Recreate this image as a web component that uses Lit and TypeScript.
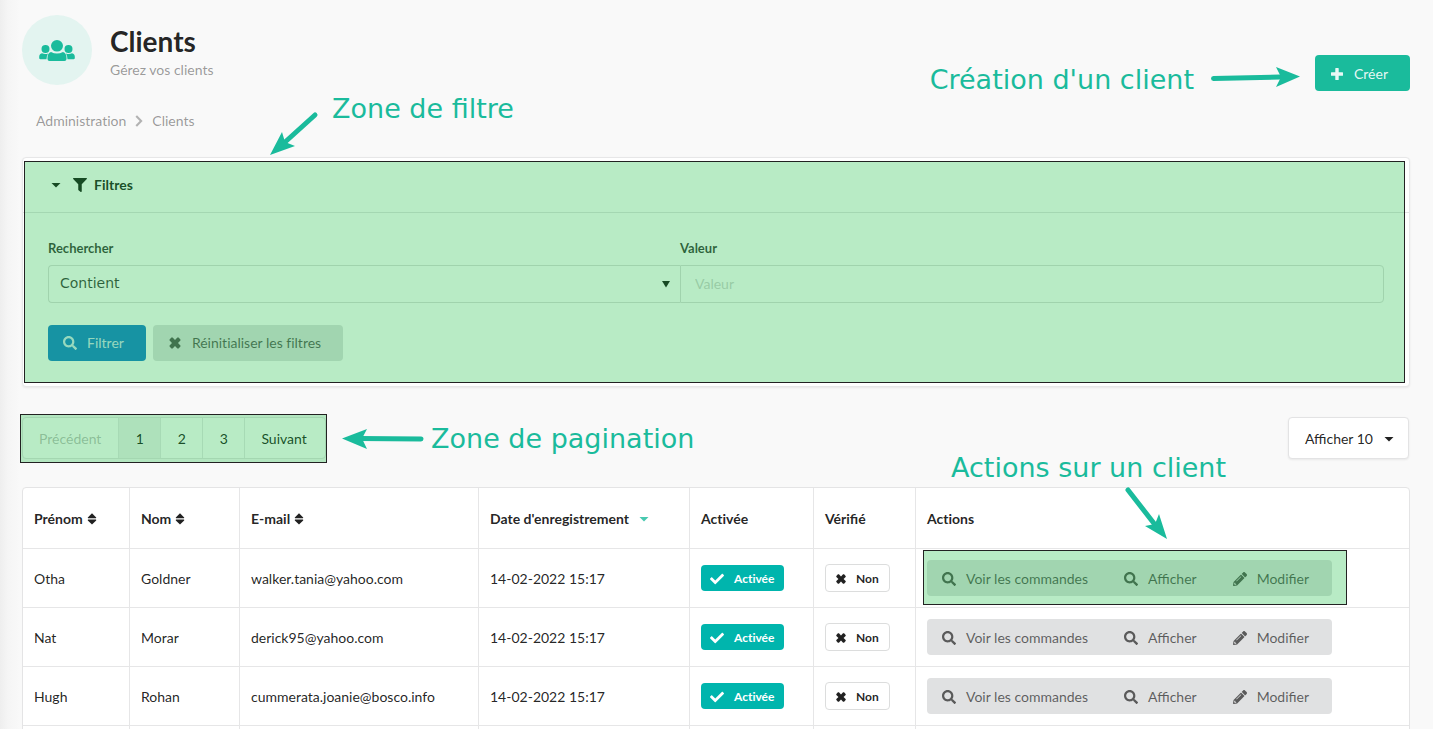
import { LitElement, html, css, svg } from "lit";
import { customElement } from "lit/decorators.js";

const ICONS: Record<string, { box: string; d: string }> = {
  search: { box: "0 0 512 512", d: "M505 442.7L405.3 343c-4.5-4.5-10.6-7-17-7H372c27.6-35.3 44-79.7 44-128C416 93.1 322.9 0 208 0S0 93.1 0 208s93.1 208 208 208c48.3 0 92.7-16.4 128-44v16.3c0 6.4 2.5 12.5 7 17l99.7 99.7c9.4 9.4 24.6 9.4 33.9 0l28.3-28.3c9.4-9.4 9.4-24.6.1-34zM208 336c-70.7 0-128-57.2-128-128 0-70.7 57.2-128 128-128 70.7 0 128 57.2 128 128 0 70.7-57.2 128-128 128z" },
  check: { box: "0 0 512 512", d: "M173.898 439.404l-166.4-166.4c-9.997-9.997-9.997-26.206 0-36.204l36.203-36.204c9.997-9.998 26.207-9.998 36.204 0L192 312.69 432.095 72.596c9.997-9.997 26.207-9.997 36.204 0l36.203 36.204c9.997 9.997 9.997 26.206 0 36.204l-294.4 294.401c-9.998 9.997-26.207 9.997-36.204-.001z" },
  times: { box: "0 0 14 14", d: "M1.6 3.4 3.4 1.6Q4 1.2 4.6 1.6L7 4 9.4 1.6Q10 1.2 10.6 1.6L12.4 3.4Q12.8 4 12.4 4.6L10 7 12.4 9.4Q12.8 10 12.4 10.6L10.6 12.4Q10 12.8 9.4 12.4L7 10 4.6 12.4Q4 12.8 3.4 12.4L1.6 10.6Q1.2 10 1.6 9.4L4 7 1.6 4.6Q1.2 4 1.6 3.4z" },
  plus: { box: "0 0 14 14", d: "M5.3 1.5Q5.3 1 5.8 1H8.2Q8.7 1 8.7 1.5V5.3H12.5Q13 5.3 13 5.8V8.2Q13 8.7 12.5 8.7H8.7V12.5Q8.7 13 8.2 13H5.8Q5.3 13 5.3 12.5V8.7H1.5Q1 8.7 1 8.2V5.8Q1 5.3 1.5 5.3H5.3z" },
  pencil: { box: "0 0 512 512", d: "M497.9 142.1l-46.1 46.1c-4.7 4.7-12.3 4.7-17 0l-111-111c-4.7-4.7-4.7-12.3 0-17l46.1-46.1c18.7-18.7 49.1-18.7 67.9 0l60.1 60.1c18.8 18.7 18.8 49.1 0 67.9zM284.2 99.8L21.6 362.4.4 483.9c-2.9 16.4 11.4 30.6 27.8 27.8l121.5-21.3 262.6-262.6c4.7-4.7 4.7-12.3 0-17l-111-111c-4.8-4.7-12.4-4.7-17.1 0zM124.1 339.9c-5.5-5.5-5.5-10.3 0-15.8l158-158c5.500-5.500 9.300-5.500 14.800 0s5.500 9.300 0 14.800l-158 159c-5.500 5.500-9.300 5.500-14.800 0zM88 440h32v20.300l-48.500 11.300-31.100-31.100L51.700 396H88v44z" },
  filter: { box: "0 0 512 512", d: "M487.976 0H24.028C2.71 0-8.047 25.866 7.058 40.971L192 225.941V432c0 7.831 3.821 15.17 10.237 19.662l80 55.98C298.02 518.69 320 507.493 320 487.98V225.941l184.947-184.97C520.021 25.896 509.338 0 487.976 0z" },
  users: { box: "0 -1 36 22", d: "M18 0a6 5.800 0 1 1 0 11.600a6 5.800 0 1 1 0-11.600zM6.500 5a4 4 0 1 1 0 8a4 4 0 1 1 0-8zM29.500 5a4 4 0 1 1 0 8a4 4 0 1 1 0-8zM12 12Q18 15 24 12Q27.500 13 27.500 18V19Q27.500 21 25.500 21H10.500Q8.500 21 8.500 19V18Q8.500 13 12 12zM3 13.300Q6 14.800 9 13.500Q7.500 16 7.500 19.300H1.500Q.2 19.300.2 18V16.800Q.2 14 3 13.300zM33 13.300Q30 14.800 27 13.500Q28.500 16 28.500 19.300H34.500Q35.800 19.300 35.800 18V16.800Q35.800 14 33 13.300z" },
  sort: { box: "0 0 10 14", d: "M5 1.200L9.200 5.400Q9.400 6.200 8.800 6.200H1.200Q.6 6.200.8 5.400zM5 12.600L9.200 8.400Q9.400 7.600 8.800 7.600H1.200Q.6 7.600.8 8.400z" },
  caret: { box: "0 0 10 14", d: "M.5 5H9.500L5 9.500z" },
  triangle: { box: "0 0 10 14", d: "M1 4H9L5 10.500z" },
  chevron: { box: "0 0 10 14", d: "M1.500 2.800L3 1.300 8.600 7 3 12.700 1.500 11.200 5.700 7z" },
};

const icon = (name: string) =>
  html`<svg class="icon ${name}" viewBox=${ICONS[name].box} aria-hidden="true">${svg`<path d=${ICONS[name].d} fill="currentColor" fill-rule="evenodd"/>`}</svg>`;

const CLIENTS = [
  ["Otha", "Goldner", "walker.tania@yahoo.com"],
  ["Nat", "Morar", "derick95@yahoo.com"],
  ["Hugh", "Rohan", "cummerata.joanie@bosco.info"],
];

const DATE = "14-02-2022 15:17";

@customElement("app-root")
export class AppRoot extends LitElement {
  static styles = css`
    :host {
      display: block;
      box-sizing: border-box;
      height: 100vh;
      overflow: hidden;
      padding: 15px 23px 0 22px;
      background: linear-gradient(to right, #eee, #f5f5f5 8px, #f9f9f9 20px);
      font: 14px/20px Lato, sans-serif;
      color: rgba(0, 0, 0, 0.87);
    }
    * { box-sizing: border-box; }
    a { color: inherit; text-decoration: none; }
    button, input { font: inherit; color: inherit; margin: 0; }
    .icon { flex: none; display: block; width: 14px; height: 14px; }
    .icon.sort, .icon.caret, .icon.chevron, .icon.triangle { width: 10px; }
    .plain { font-variant-ligatures: none; }

    header { display: flex; align-items: center; gap: 18px; height: 70px; }
    .avatar {
      display: flex; align-items: center; justify-content: center;
      width: 70px; height: 70px; border-radius: 50%;
      background: #e3f4f0; color: #1abb9c;
    }
    .avatar .icon { width: 36px; height: 22px; }
    .titles { flex: 1; padding-top: 3px; }
    h1 { margin: 0; font-size: 28px; line-height: 36px; font-weight: 700; }
    .sub { margin: 0; line-height: 22px; color: rgba(0, 0, 0, 0.4); }
    .anchor { position: relative; }
    header .anchor { margin-top: 46px; }

    .btn {
      display: inline-flex; align-items: center; gap: 9px;
      height: 36px; padding: 0 22px 0 14px; border: 0; border-radius: 4px;
      background: #e0e1e2; color: rgba(0, 0, 0, 0.6); white-space: nowrap;
    }
    .btn .icon { width: 16px; }
    .btn.create { padding-top: 2px; background: #1abb9c; color: rgba(255, 255, 255, 0.9); }
    .btn.primary { background: #2185d0; color: rgba(255, 255, 255, 0.8); }

    .crumbs { display: flex; align-items: center; gap: 8px; padding: 26px 14px; color: rgba(0, 0, 0, 0.4); }
    .crumbs .icon { opacity: 0.7; }

    .card {
      position: relative; border: 1px solid #e7e7e8; border-radius: 4px;
      background: #fff; box-shadow: 0 1px 2px rgba(34, 36, 38, 0.08);
    }
    .card h2 {
      display: flex; align-items: center; height: 55px; margin: 0; padding: 0 28px;
      border-bottom: 1px solid #e4e4e5; font-size: 14px; font-weight: 700;
    }
    .card h2 .filter { margin: 0 7px 0 12px; }
    .form { padding: 25px; }
    .fields { display: grid; grid-template-columns: 632fr 704fr; }
    .fields label { font-size: 13px; font-weight: 700; padding-bottom: 7px; color: rgba(0, 0, 0, 0.75); }
    .control { position: relative; display: flex; align-items: center; }
    .control select, .fields input {
      width: 100%; height: 38px; border: 1px solid #dedede; background: transparent; outline: 0;
    }
    .control select {
      appearance: none; padding: 0 11px 2px; border-right: 0; border-radius: 4px 0 0 4px;
      font: 14px "DejaVu Sans", sans-serif; color: rgba(0, 0, 0, 0.75);
    }
    .control .icon { position: absolute; right: 9px; pointer-events: none; }
    .fields input { padding: 0 14px 2px; border-radius: 0 4px 4px 0; }
    .fields input::placeholder { color: rgba(191, 191, 191, 0.7); opacity: 1; }
    .buttons { display: flex; gap: 7px; padding-top: 22px; }

    .zone {
      position: absolute; border: 1px solid #222; pointer-events: none;
      background: rgba(0, 183, 48, 0.28);
    }
    .card .zone { inset: 3px 4px 3px 1px; }
    .pages .zone { inset: -4px -2px -5px -3px; }
    .group .zone { inset: -10px -15px -9px -4px; }
    .note {
      position: absolute; white-space: nowrap; pointer-events: none;
      font: 27px/32px "DejaVu Sans", sans-serif; color: #1abb9c;
    }
    .arrow { position: absolute; overflow: visible; pointer-events: none; color: #1abb9c; }
    .note.n-create { right: 216px; top: 9px; }
    .arrow.a-create { right: 110px; top: 11px; }
    .note.n-filter { left: 309px; top: -65px; }
    .arrow.a-filter { left: 247px; top: -46px; }
    .note.n-pages { left: 408px; top: 5px; }
    .arrow.a-pages { left: 319px; top: 11px; }
    .note.n-actions { left: 24px; top: -108px; }
    .arrow.a-actions { left: 197px; top: -74px; }

    .bar { display: flex; align-items: flex-start; justify-content: space-between; padding: 30px 1px 28px 0; }
    .pages {
      position: relative; display: flex; border: 1px solid #e3e3e4; border-radius: 4px;
      background: #fff; height: 42px;
    }
    .pages button {
      border: 0; border-right: 1px solid #e8e8e9; background: none;
      padding: 2px 16px 0; min-width: 42px;
    }
    .pages button:first-of-type { padding-right: 17px; }
    .pages button:last-of-type { border-right: 0; padding-right: 18px; }
    .pages button:disabled { color: rgba(40, 40, 40, 0.3); }
    .pages .on { background: rgba(0, 0, 0, 0.05); }
    .show {
      display: flex; align-items: center; gap: 11px; height: 42px; padding: 2px 14px 0 16px;
      border: 1px solid #e3e3e4; border-radius: 4px; background: #fff;
      box-shadow: 0 1px 2px rgba(34, 36, 38, 0.08);
    }

    table {
      width: 100%; table-layout: fixed; border-collapse: separate; border-spacing: 0;
      border: 1px solid #e4e4e5; border-radius: 4px; background: #fff;
    }
    .w1 { width: 106px; } .w2 { width: 110px; } .w3 { width: 239px; } .w4 { width: 211px; }
    .w5 { width: 124px; } .w6 { width: 102px; }
    th, td { padding: 2px 11px 0; text-align: left; border-left: 1px solid #e6e6e7; white-space: nowrap; }
    th { height: 60px; font-weight: 700; }
    td { height: 59px; border-top: 1px solid #e6e6e7; }
    td.controls { padding-top: 0; }
    th:first-child, td:first-child { border-left: 0; }
    .head { display: flex; align-items: center; gap: 4px; }
    .head .caret { color: #48c9b0; margin-left: 6px; }
    .tag {
      display: inline-flex; align-items: center; gap: 10px; height: 26px; padding: 1px 10px 0 9px;
      border-radius: 4px; background: #00b5ad; color: #fff; font-size: 12px; font-weight: 700;
      vertical-align: middle;
    }
    .tag.no { height: 28px; gap: 9px; background: #fff; color: rgba(0, 0, 0, 0.87); border: 1px solid #dcdddd; }
    .tag.no .icon { width: 12px; height: 12px; }
    .group {
      position: relative; display: inline-flex; vertical-align: middle; padding-right: 2px;
      border-radius: 4px; background: #e0e1e2;
    }
    .group .btn { padding: 2px 21px 0 14px; background: none; }
  `;

  private actions(first: boolean) {
    return html`<div class="group">
      <button class="btn">${icon("search")}Voir les commandes</button>
      <button class="btn">${icon("search")}Afficher</button>
      <button class="btn">${icon("pencil")}Modifier</button>
      ${first
        ? html`<span class="zone"></span>
            <span class="note n-actions">Actions sur un client</span>
            <svg class="arrow a-actions" width="44" height="54" viewBox="0 0 44 54" aria-hidden="true">
              <path d="M4 4L32 40" stroke="currentColor" stroke-width="5" stroke-linecap="round" />
              <path d="M43 53L21 40L31 38L35 28z" fill="currentColor" />
            </svg>`
        : ""}
    </div>`;
  }

  render() {
    return html`
      <header>
        <div class="avatar">${icon("users")}</div>
        <div class="titles">
          <h1>Clients</h1>
          <p class="sub">Gérez vos clients</p>
        </div>
        <div class="anchor">
          <button class="btn create">${icon("plus")}Créer</button>
          <span class="note n-create">Création d'un client</span>
          <svg class="arrow a-create" width="90" height="22" viewBox="0 0 90 22" aria-hidden="true">
            <path d="M3.500 12.500L70 11" stroke="currentColor" stroke-width="5" stroke-linecap="round" />
            <path d="M90 10.500L66 1L71 11L66 21z" fill="currentColor" />
          </svg>
        </div>
      </header>
      <nav class="crumbs plain" aria-label="Fil d'Ariane">
        <a href="#">Administration</a>${icon("chevron")}<span>Clients</span>
      </nav>
      <section class="card">
        <h2>${icon("caret")}${icon("filter")}Filtres</h2>
        <div class="form">
          <div class="fields">
            <label for="search-type">Rechercher</label>
            <label for="search-value">Valeur</label>
            <div class="control">
              <select id="search-type"><option>Contient</option></select>
              ${icon("triangle")}
            </div>
            <input id="search-value" type="text" placeholder="Valeur" />
          </div>
          <div class="buttons">
            <button class="btn primary">${icon("search")}Filtrer</button>
            <button class="btn plain">${icon("times")}Réinitialiser les filtres</button>
          </div>
        </div>
        <span class="zone"></span>
        <span class="note n-filter">Zone de filtre</span>
        <svg class="arrow a-filter" width="48" height="44" viewBox="0 0 48 44" aria-hidden="true">
          <path d="M45 3L14 31" stroke="currentColor" stroke-width="5" stroke-linecap="round" />
          <path d="M0 43L12 20L15 30L25 34z" fill="currentColor" />
        </svg>
      </section>
      <div class="bar">
        <nav class="pages" aria-label="Pagination">
          <button disabled>Précédent</button>
          <button class="on">1</button>
          <button>2</button>
          <button>3</button>
          <button>Suivant</button>
          <span class="zone"></span>
          <span class="note n-pages">Zone de pagination</span>
          <svg class="arrow a-pages" width="82" height="20" viewBox="0 0 82 20" aria-hidden="true">
            <path d="M18 9.500L79 10" stroke="currentColor" stroke-width="5" stroke-linecap="round" />
            <path d="M0 9.500L25 0L20 9.500L25 20z" fill="currentColor" />
          </svg>
        </nav>
        <button class="show">Afficher 10 ${icon("caret")}</button>
      </div>
      <table>
        <colgroup>
          <col class="w1" /><col class="w2" /><col class="w3" /><col class="w4" /><col class="w5" /><col class="w6" /><col />
        </colgroup>
        <thead>
          <tr>
            <th><span class="head">Prénom ${icon("sort")}</span></th>
            <th><span class="head">Nom ${icon("sort")}</span></th>
            <th><span class="head">E-mail ${icon("sort")}</span></th>
            <th><span class="head">Date d'enregistrement ${icon("caret")}</span></th>
            <th class="plain">Activée</th>
            <th>Vérifié</th>
            <th class="plain">Actions</th>
          </tr>
        </thead>
        <tbody>
          ${CLIENTS.map(
            ([first, last, mail], i) => html`<tr>
              <td>${first}</td>
              <td>${last}</td>
              <td>${mail}</td>
              <td>${DATE}</td>
              <td class="controls"><span class="tag plain">${icon("check")}Activée</span></td>
              <td class="controls"><span class="tag no">${icon("times")}Non</span></td>
              <td class="controls">${this.actions(i === 0)}</td>
            </tr>`
          )}
          <tr><td></td><td></td><td></td><td></td><td></td><td></td><td></td></tr>
        </tbody>
      </table>
    `;
  }
}
